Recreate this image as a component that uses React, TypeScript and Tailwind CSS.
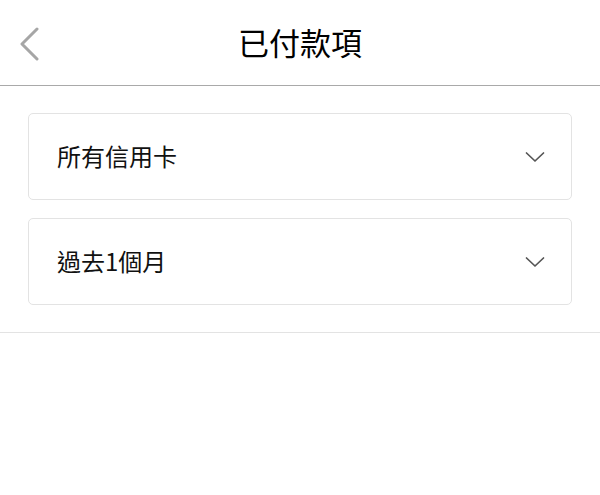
const FONT = '"Noto Sans CJK TC", "Noto Sans CJK SC", "Liberation Sans", sans-serif';

function ChevronDown() {
  return (
    <svg width="20" height="12" viewBox="0 0 20 12" fill="none">
      <path d="M1.5 2 L10 10 L18.5 2" stroke="#555" strokeWidth="1.7" strokeLinecap="round" strokeLinejoin="round" />
    </svg>
  );
}

function Select({ label }: { label: string }) {
  return (
    <div className="flex h-[87px] items-center justify-between rounded-[5px] border border-[#e3e3e3] bg-white pl-[28px] pr-[26px]">
      <span className="-mt-[2px] text-[24px] text-[#111]">{label}</span>
      <ChevronDown />
    </div>
  );
}

export default function App() {
  return (
    <div className="min-h-[495px] w-[600px] bg-white" style={{ fontFamily: FONT }}>
      <header className="relative flex h-[86px] items-center justify-center border-b border-[#a9a9a9]">
        <button className="absolute left-[18px] top-[27px]">
          <svg width="24" height="34" viewBox="0 0 24 34" fill="none">
            <path d="M19 2 L4 17 L19 32" stroke="#a6a6a6" strokeWidth="3" strokeLinecap="round" strokeLinejoin="round" />
          </svg>
        </button>
        <h1 className="text-[31px] font-normal text-black">已付款項</h1>
      </header>
      <div className="flex flex-col gap-[18px] border-b border-[#e3e3e3] px-[28px] py-[27px]">
        <Select label="所有信用卡" />
        <Select label="過去1個月" />
      </div>
    </div>
  );
}
